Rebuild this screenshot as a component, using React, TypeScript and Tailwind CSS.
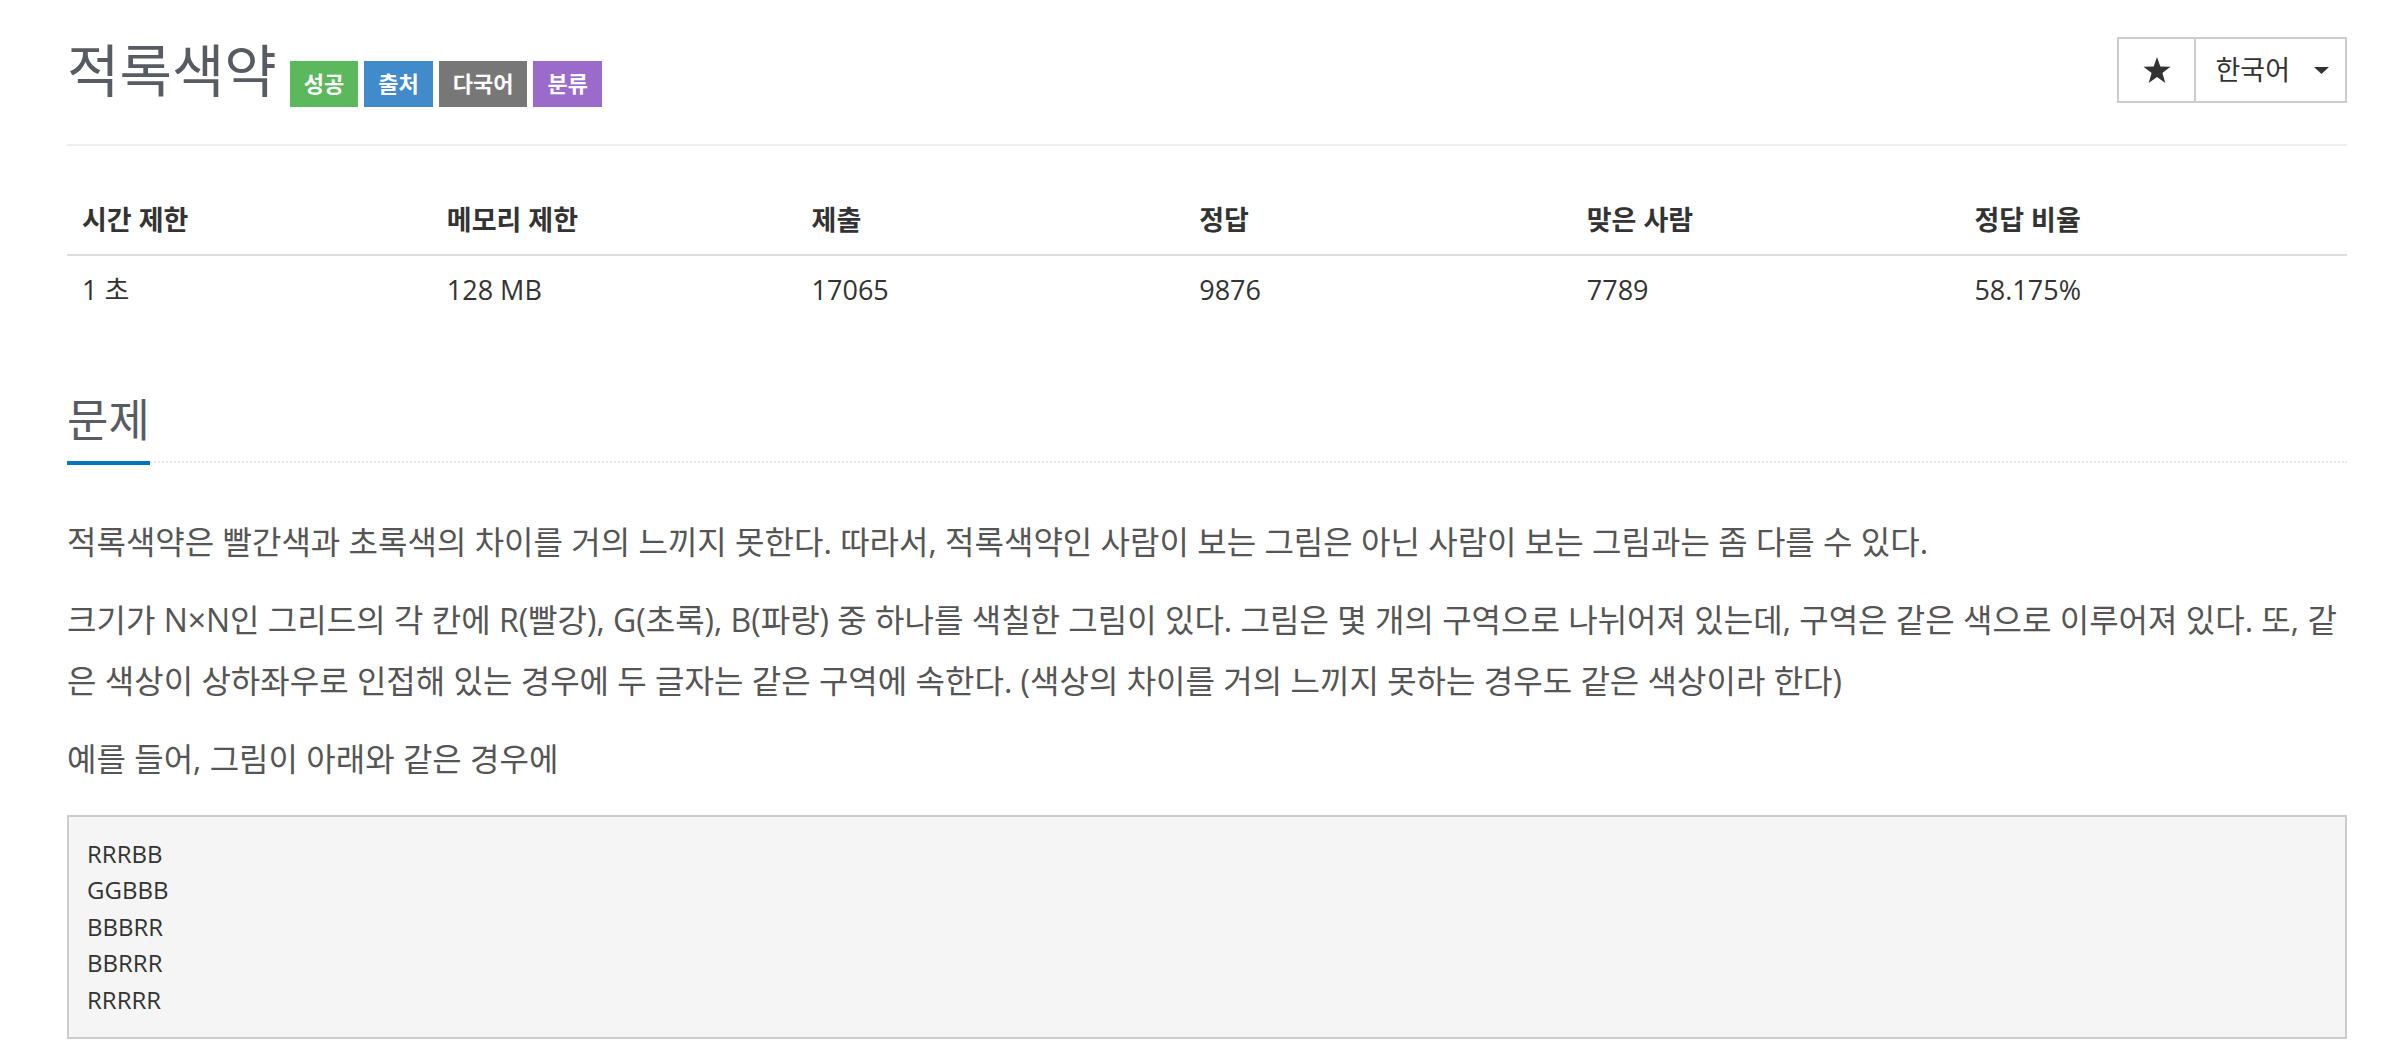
const stats = [
  { label: '시간 제한', value: '1 초', w: 'w-[16%]' },
  { label: '메모리 제한', value: '128 MB', w: 'w-[16%]' },
  { label: '제출', value: '17065', w: 'w-[17%]' },
  { label: '정답', value: '9876', w: 'w-[17%]' },
  { label: '맞은 사람', value: '7789', w: 'w-[17%]' },
  { label: '정답 비율', value: '58.175%', w: 'w-[17%]' },
];

const badges = [
  { text: '성공', cls: 'bg-[#5cb85c]' },
  { text: '출처', cls: 'bg-[#428bca]' },
  { text: '다국어', cls: 'bg-[#777777]' },
  { text: '분류', cls: 'bg-[#9b6bcc]' },
];

const grid = ['RRRBB', 'GGBBB', 'BBBRR', 'BBRRR', 'RRRRR'];

function StarIcon() {
  return (
    <svg width="28" height="27" viewBox="0 0 28 27">
      <polygon
        points="14,0 17.3,9.6 27.5,9.8 19.4,16 22.3,26 14,20.1 5.7,26 8.6,16 0.5,9.8 10.7,9.6"
        fill="#333"
      />
    </svg>
  );
}

function Caret() {
  return (
    <svg width="15" height="7" viewBox="0 0 15 7">
      <polygon points="0,0 15,0 7.5,7" fill="#333" />
    </svg>
  );
}

export default function App() {
  return (
    <div className="min-h-screen bg-white font-['Open_Sans','Noto_Sans_CJK_KR',sans-serif]">
      <div className="pl-[67px] pr-[38px] pt-[37px]">
        {/* 제목 */}
        <div className="flex items-start justify-between">
          <h1 className="flex items-baseline">
            <span className="text-[57px] leading-[66px] text-[#575c63] mr-[13px]">적록색약</span>
            {badges.map((b) => (
              <span
                key={b.text}
                className={`${b.cls} inline-flex h-[46px] items-center px-[14px] mr-[6px] text-[22px] font-bold text-white`}
              >
                {b.text}
              </span>
            ))}
          </h1>
          <div className="flex h-[66px] border-[2px] border-[#cccccc] text-[#333]">
            <div className="flex w-[75px] items-center justify-center">
              <StarIcon />
            </div>
            <div className="flex items-center border-l-[2px] border-[#cccccc] pl-[19px] pr-[16px] text-[27px]">
              <span>한국어</span>
              <span className="ml-[24px] flex items-center">
                <Caret />
              </span>
            </div>
          </div>
        </div>
        <div className="mt-[37px] border-t-[2px] border-[#eeeeee]" />

        {/* 정보 표 */}
        <table className="mt-[40px] w-full table-fixed border-collapse text-[27px] text-[#333]">
          <thead>
            <tr className="border-b-[2px] border-[#dddddd]">
              {stats.map((s) => (
                <th key={s.label} className={`${s.w} px-[15px] py-[15px] text-left font-bold leading-[38px]`}>
                  {s.label}
                </th>
              ))}
            </tr>
          </thead>
          <tbody>
            <tr>
              {stats.map((s) => (
                <td key={s.label} className="px-[15px] py-[15px] leading-[38px]">
                  {s.value}
                </td>
              ))}
            </tr>
          </tbody>
        </table>

        {/* 문제 */}
        <div className="mt-[72px] border-b-[2px] border-dotted border-[#e4e9f0]">
          <h2 className="inline-block mb-[-4px] border-b-[4px] border-[#0076c0] pb-[18px] text-[45px] leading-[47px] text-[#575c63]">
            문제
          </h2>
        </div>

        <div className="mt-[48px] text-[32px] leading-[61px] text-[#555555]">
          <p className="mb-[17px]">
            적록색약은 빨간색과 초록색의 차이를 거의 느끼지 못한다. 따라서, 적록색약인 사람이 보는 그림은 아닌 사람이 보는 그림과는 좀 다를 수 있다.
          </p>
          <p className="mb-[17px]">
            크기가 N×N인 그리드의 각 칸에 R(빨강), G(초록), B(파랑) 중 하나를 색칠한 그림이 있다. 그림은 몇 개의 구역으로 나뉘어져 있는데, 구역은 같은 색으로 이루어져 있다. 또, 같은 색상이 상하좌우로 인접해 있는 경우에 두 글자는 같은 구역에 속한다. (색상의 차이를 거의 느끼지 못하는 경우도 같은 색상이라 한다)
          </p>
          <p>예를 들어, 그림이 아래와 같은 경우에</p>
        </div>

        <pre className="mt-[26px] border-[2px] border-[#cccccc] bg-[#f5f5f5] px-[18px] py-[19px] font-['Open_Sans',sans-serif] text-[24px] leading-[36.6px] text-[#333]">
          {grid.join('\n')}
        </pre>
      </div>
    </div>
  );
}
